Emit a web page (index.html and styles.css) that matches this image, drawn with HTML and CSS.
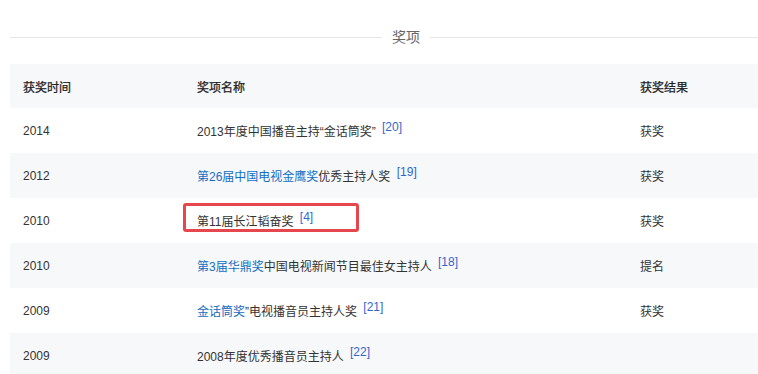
FILE: index.html
```html
<!DOCTYPE html>
<html lang="zh">
<head>
<meta charset="utf-8">
<link rel="stylesheet" href="styles.css">
</head>
<body>
<div class="page">
  <div class="section-title"><span class="line"></span><span class="title">奖项</span><span class="line"></span></div>
  <table class="awards">
    <colgroup><col class="c1"><col class="c2"><col class="c3"></colgroup>
    <thead>
      <tr><th>获奖时间</th><th>奖项名称</th><th>获奖结果</th></tr>
    </thead>
    <tbody>
      <tr><td>2014</td><td>2013年度中国播音主持“金话筒奖” <sup>[20]</sup></td><td>获奖</td></tr>
      <tr class="alt"><td>2012</td><td><a>第26届中国电视金鹰奖</a>优秀主持人奖 <sup>[19]</sup></td><td>获奖</td></tr>
      <tr><td>2010</td><td class="marked">第11届长江韬奋奖 <sup>[4]</sup><span class="mark"></span></td><td>获奖</td></tr>
      <tr class="alt"><td>2010</td><td><a>第3届华鼎奖</a>中国电视新闻节目最佳女主持人 <sup>[18]</sup></td><td>提名</td></tr>
      <tr><td>2009</td><td><a>金话筒奖</a>”电视播音员主持人奖 <sup>[21]</sup></td><td>获奖</td></tr>
      <tr class="alt"><td>2009</td><td>2008年度优秀播音员主持人 <sup>[22]</sup></td><td></td></tr>
    </tbody>
  </table>
</div>
</body>
</html>
```
FILE: styles.css
```css
html, body { margin: 0; padding: 0; background: #fff; }
body {
  font-family: "Liberation Sans", "Noto Sans CJK SC", sans-serif;
  font-size: 12px;
  color: #333;
  overflow: hidden;
}
.page { padding: 0 0 0 10px; width: 760px; }
.section-title {
  display: flex;
  align-items: center;
  height: 28px;
  margin-top: 23px;
  margin-bottom: 13px;
}
.section-title .line { flex: 1; height: 1px; background: #e6e6e6; }
.section-title .line:first-child { flex: 0 0 372px; }
.section-title .title {
  padding: 0 10px;
  font-size: 14px;
  color: #666;
  line-height: 20px;
}
.awards {
  border-collapse: collapse;
  width: 760px;
  table-layout: fixed;
}
.awards col.c1 { width: 174px; }
.awards col.c2 { width: 443px; }
.awards th, .awards td {
  text-align: left;
  padding: 0 13px;
  height: 45px;
  vertical-align: middle;
  white-space: nowrap;
}
.awards thead tr { background: #f7f8fa; }
.awards th { font-weight: normal; color: #222; height: 44px; -webkit-text-stroke: 0.25px #222; }
.awards tr.alt { background: #f7f8fa; }
.awards a { color: #136ec2; text-decoration: none; }
.awards sup {
  color: #3366cc;
  font-family: "Liberation Sans", Arial, sans-serif;
  font-size: 12px;
  vertical-align: 5px;
  line-height: 0;
  margin-left: 3px;
}
.awards td.marked { position: relative; }
.mark {
  position: absolute;
  left: -1px;
  top: 5px;
  width: 170px;
  height: 23px;
  border: 3px solid #e5474d;
  border-radius: 3px;
}
```
